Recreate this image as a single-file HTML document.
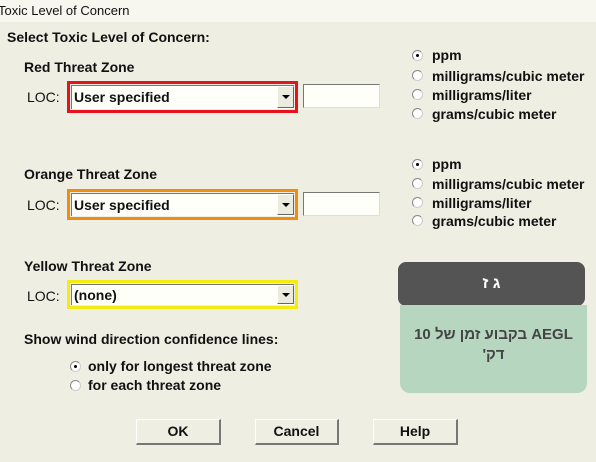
<!DOCTYPE html>
<html><head><meta charset="utf-8"><style>
*{margin:0;padding:0;box-sizing:border-box}
body{width:596px;height:462px;background:#efeee2;font-family:"Liberation Sans",Arial,sans-serif;font-size:14px;color:#111;position:relative;overflow:hidden}
.a{position:absolute;white-space:nowrap}
.b{font-weight:bold}
.dd{position:absolute;border:3px solid;padding:0}
.dd .in{position:absolute;left:1px;top:1px;right:1px;bottom:1px;background:#fffffa;border-top:1px solid #777;border-left:1px solid #777}
.dd .t{position:absolute;left:4px;top:50%;transform:translateY(-50%);font-weight:bold;font-size:14px}
.dd .btn{position:absolute;right:1px;top:2px;bottom:2px;width:17px;background:#ecebe0;border-right:1px solid #666;border-bottom:1px solid #666;border-top:1px solid #fff;border-left:1px solid #fff}
.dd .btn:after{content:"";position:absolute;left:4px;top:50%;margin-top:-2px;border-left:4px solid transparent;border-right:4px solid transparent;border-top:4px solid #000}
.tb{position:absolute;background:#fffffa;border-top:1px solid #777;border-left:1px solid #777;border-bottom:1px solid #ddd;border-right:1px solid #ddd}
.r{position:absolute;width:11px;height:11px;border-radius:50%;border:1px solid #ccc;border-top-color:#888;border-left-color:#888;background:#fff}
.r.on:after{content:"";position:absolute;left:3px;top:3px;width:3px;height:3px;background:#000;border-radius:50%}
.bt{position:absolute;height:26px;background:#efeee2;border-top:1px solid #fff;border-left:1px solid #fff;border-right:2px solid #777;border-bottom:2px solid #777;font-weight:bold;text-align:center;line-height:23px}
</style></head><body>
<div class="a" style="left:0;top:0;width:596px;height:22px;background:#f7f7f0"></div>
<div class="a" style="left:-2px;top:3px;font-size:13px">Toxic Level of Concern</div>
<div class="a b" style="left:7px;top:29px">Select Toxic Level of Concern:</div>

<div class="a b" style="left:24px;top:59px">Red Threat Zone</div>
<div class="a" style="left:27px;top:89px">LOC:</div>
<div class="dd" style="left:67px;top:81px;width:231px;height:32px;border-color:#e8121c"><div class="in"></div><div class="t">User specified</div><div class="btn"></div></div>
<div class="tb" style="left:303px;top:84px;width:77px;height:24px"></div>
<div class="r on" style="left:412px;top:50px"></div><div class="a b" style="left:432px;top:47px">ppm</div>
<div class="r" style="left:412px;top:70px"></div><div class="a b" style="left:432px;top:68px">milligrams/cubic meter</div>
<div class="r" style="left:412px;top:89px"></div><div class="a b" style="left:432px;top:87px">milligrams/liter</div>
<div class="r" style="left:412px;top:108px"></div><div class="a b" style="left:432px;top:106px">grams/cubic meter</div>

<div class="a b" style="left:24px;top:166px">Orange Threat Zone</div>
<div class="a" style="left:27px;top:197px">LOC:</div>
<div class="dd" style="left:67px;top:189px;width:231px;height:31px;border-color:#f08c10"><div class="in"></div><div class="t">User specified</div><div class="btn"></div></div>
<div class="tb" style="left:303px;top:192px;width:77px;height:24px"></div>
<div class="r on" style="left:412px;top:159px"></div><div class="a b" style="left:432px;top:156px">ppm</div>
<div class="r" style="left:412px;top:178px"></div><div class="a b" style="left:432px;top:176px">milligrams/cubic meter</div>
<div class="r" style="left:412px;top:197px"></div><div class="a b" style="left:432px;top:195px">milligrams/liter</div>
<div class="r" style="left:412px;top:215px"></div><div class="a b" style="left:432px;top:213px">grams/cubic meter</div>

<div class="a b" style="left:24px;top:258px">Yellow Threat Zone</div>
<div class="a" style="left:27px;top:288px">LOC:</div>
<div class="dd" style="left:67px;top:280px;width:231px;height:29px;border-color:#f4ec10"><div class="in"></div><div class="t">(none)</div><div class="btn"></div></div>

<div class="a" style="left:398px;top:262px;width:187px;height:44px;background:#545454;border-radius:8px;color:#fff;font-weight:bold;text-align:center;line-height:44px;font-family:'Liberation Sans','Noto Sans CJK SC',sans-serif;font-size:16px">ג ז</div>
<div class="a" style="left:400px;top:305px;width:187px;height:88px;background:#b6d6c0;border-radius:0 0 10px 10px;color:#444;font-weight:bold;text-align:center;font-family:'Liberation Sans','Noto Sans CJK SC',sans-serif;font-size:15px;white-space:normal;padding:20px 8px 0;line-height:20px" dir="rtl">AEGL בקבוע זמן של 10 דק'</div>

<div class="a b" style="left:24px;top:331px">Show wind direction confidence lines:</div>
<div class="r on" style="left:70px;top:361px"></div><div class="a b" style="left:88px;top:358px">only for longest threat zone</div>
<div class="r" style="left:70px;top:380px"></div><div class="a b" style="left:88px;top:377px">for each threat zone</div>

<div class="bt" style="left:136px;top:419px;width:85px">OK</div>
<div class="bt" style="left:255px;top:419px;width:84px">Cancel</div>
<div class="bt" style="left:373px;top:419px;width:85px">Help</div>
</body></html>
